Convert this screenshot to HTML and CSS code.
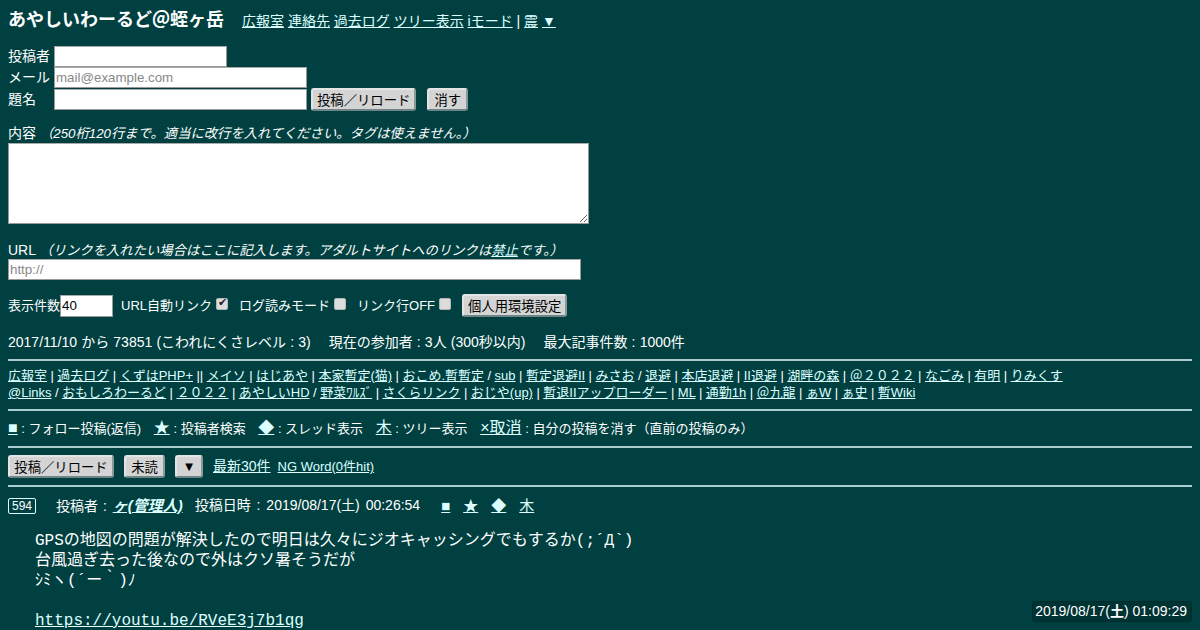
FILE: index.html
```html
<!DOCTYPE html>
<html lang="ja">
<head>
  <meta charset="UTF-8">
  <title>あやしいわーるど＠蛭ヶ岳</title>
  <link rel="stylesheet" href="styles.css">
</head>
<body>
  <div class="top-line">
    <span class="site-title">あやしいわーるど＠蛭ヶ岳</span>
    <span class="top-links">
      <a href="#">広報室</a> <a href="#">連絡先</a> <a href="#">過去ログ</a> <a href="#">ツリー表示</a> <a href="#">iモード</a> | <a href="#">震</a> <a href="#">▼</a>
    </span>
  </div>

  <form class="post-form">
    <div class="field-row"><span class="field-label">投稿者</span><input class="input-name" type="text"></div>
    <div class="field-row"><span class="field-label">メール</span><input class="input-wide" type="text" placeholder="mail@example.com"></div>
    <div class="field-row subject-row">
      <span class="field-label">題名</span><input class="input-wide" type="text">
      <button class="btn btn-post" type="button">投稿／リロード</button>
      <button class="btn btn-clear btn-short" type="button">消す</button>
    </div>

    <div class="field-note">内容 <i class="note">（250桁120行まで。適当に改行を入れてください。タグは使えません。）</i></div>
    <textarea class="input-body"></textarea>

    <div class="field-note url-note">URL <i class="note">（リンクを入れたい場合はここに記入します。アダルトサイトへのリンクは<a href="#">禁止</a>です。）</i></div>
    <input class="input-url" type="text" placeholder="http://">

    <div class="option-row">
      <span>表示件数</span><input class="input-count" type="text" value="40">
      <span class="opt opt-first">URL自動リンク</span><input class="check" type="checkbox" checked>
      <span class="opt">ログ読みモード</span><input class="check" type="checkbox">
      <span class="opt">リンク行OFF</span><input class="check" type="checkbox">
      <button class="btn btn-env" type="button">個人用環境設定</button>
    </div>
  </form>

  <div class="stats">2017/11/10 から 73851 (こわれにくさレベル : 3)<span class="stat-gap">現在の参加者 : 3人 (300秒以内)</span><span class="stat-gap">最大記事件数 : 1000件</span></div>

  <hr>

  <div class="link-list">
    <a href="#">広報室</a> | <a href="#">過去ログ</a> | <a href="#">くずはPHP+</a> || <a href="#">メイソ</a> | <a href="#">はじあや</a> | <a href="#">本家暫定(猫)</a> | <a href="#">おこめ.暫暫定</a> / <a href="#">sub</a> | <a href="#">暫定退避II</a> | <a href="#">みさお</a> / <a href="#">退避</a> | <a href="#">本店退避</a> | <a href="#">II退避</a> | <a href="#">湖畔の森</a> | <a href="#">＠２０２２</a> | <a href="#">なごみ</a> | <a href="#">有明</a> | <a href="#">りみくす</a><br>
    <a href="#">@Links</a> / <a href="#">おもしろわーるど</a> | <a href="#">２０２２</a> | <a href="#">あやしいHD</a> / <a href="#">野菜ﾜﾙｽﾞ</a> | <a href="#">さくらリンク</a> | <a href="#">おじや(up)</a> | <a href="#">暫退IIアップローダー</a> | <a href="#">ML</a> | <a href="#">通勤1h</a> | <a href="#">＠九龍</a> | <a href="#">ぁW</a> | <a href="#">ぁ史</a> | <a href="#">暫Wiki</a>
  </div>

  <hr>

  <div class="legend">
    <a class="mark" href="#">■</a> : フォロー投稿(返信)
    <a class="mark gap" href="#">★</a> : 投稿者検索
    <a class="mark gap" href="#">◆</a> : スレッド表示
    <a class="mark gap" href="#">木</a> : ツリー表示
    <a class="mark gap" href="#">×取消</a> : 自分の投稿を消す（直前の投稿のみ）
  </div>

  <hr>

  <div class="tool-row">
    <button class="btn btn-reload" type="button">投稿／リロード</button>
    <button class="btn btn-short" type="button">未読</button>
    <button class="btn btn-arrow" type="button">▼</button>
    <a href="#">最新30件</a>
    <a class="ng" href="#">NG Word(0件hit)</a>
  </div>

  <hr>

  <div class="post">
    <div class="post-head">
      <span class="post-no">594</span>
      <span class="post-by">投稿者 : <a class="author" href="#">ヶ(管理人)</a></span>
      <span class="post-date">投稿日時 : 2019/08/17(土) 00:26:54</span>
      <span class="post-marks"><a href="#">■</a><a href="#">★</a><a href="#">◆</a><a href="#">木</a></span>
    </div>
    <pre class="post-body">GPSの地図の問題が解決したので明日は久々にジオキャッシングでもするか(;´Д`)
台風過ぎ去った後なので外はクソ暑そうだが
ｼﾐヽ(´ー｀)ﾉ

<a href="#">https://youtu.be/RVeE3j7b1qg</a></pre>
  </div>

  <div class="clock">2019/08/17(<b>土</b>) 01:09:29</div>
</body>
</html>
```

FILE: styles.css
```css
/* ページ全体 */
html, body {
  height: 100%;
}

body {
  margin: 0;
  padding: 8px;
  box-sizing: border-box;
  overflow: hidden;
  background-color: #004040;
  color: #ffffff;
  font-family: "Liberation Sans", "Noto Sans CJK JP", sans-serif;
  font-size: 14px;
  line-height: 17px;
}

a {
  color: #ddffff;
}

hr {
  margin: 0;
  height: 2px;
  border: none;
  background-color: #aacccc;
}

/* タイトル行 */
.top-line {
  display: flex;
  align-items: flex-start;
  height: 25px;
}

.site-title {
  font-size: 18px;
  font-weight: bold;
  line-height: 25px;
}

.top-links {
  margin-top: 5px;
  margin-left: 18px;
}

/* 投稿フォーム */
.post-form {
  margin-top: 13px;
}

.field-row {
  display: flex;
  align-items: center;
  height: 21px;
}

.subject-row {
  margin-top: 1px;
}

.field-label {
  width: 46px;
}

input, textarea {
  margin: 0;
  padding: 1px;
  box-sizing: border-box;
  border: 1px solid #999999;
  border-top-color: #aaaaaa;
  background-color: #ffffff;
  font-family: "Liberation Sans", "Noto Sans CJK JP", sans-serif;
  font-size: 13.33px;
}

::placeholder {
  color: #888888;
}

.input-name {
  width: 173px;
  height: 21px;
}

.input-wide {
  width: 253px;
  height: 21px;
}

.input-body {
  display: block;
  width: 581px;
  height: 81px;
}

.input-url {
  display: block;
  width: 573px;
  height: 21px;
}

.input-count {
  width: 53px;
  height: 22px;
}

.btn {
  height: 23px;
  padding: 0 4px;
  border: 2px solid;
  border-color: #e4e4e4 #8a9a9a #6f8484 #e4e4e4;
  border-radius: 3px;
  background-color: #d4d4d4;
  color: #000000;
  font-family: "Liberation Sans", "Noto Sans CJK JP", sans-serif;
  font-size: 13.33px;
}

.btn-reload {
  width: 106px;
}

.btn-short {
  width: 41px;
}

.btn-arrow {
  width: 28px;
}

.btn-post {
  margin-left: 4px;
}

.btn-clear {
  margin-left: 11px;
}

.field-note {
  margin-top: 15px;
  height: 18px;
}

.url-note {
  margin-top: 18px;
  height: 17px;
}

.note {
  font-size: 13.33px;
}

/* 表示オプション */
.option-row {
  display: flex;
  align-items: center;
  margin-top: 13px;
  height: 25px;
  font-size: 13px;
}

.opt {
  margin-left: 11px;
}

.opt-first {
  margin-left: 8px;
}

.check {
  appearance: none;
  position: relative;
  width: 12px;
  height: 12px;
  margin: 0 0 4px 4px;
  border: 1px solid #b0b8b8;
  border-radius: 2px;
  background-color: #dcdcdc;
}

.check:checked::after {
  content: "✔";
  position: absolute;
  left: 1px;
  top: -3px;
  color: #222222;
  font-size: 11px;
}

.btn-env {
  margin-left: 11px;
}

.stats {
  margin-top: 16px;
  margin-bottom: 8px;
  word-spacing: 0.25px;
}

.stat-gap {
  margin-left: 18px;
}

/* リンク一覧 */
.link-list {
  padding: 6px 0 8px;
  font-size: 13px;
  word-spacing: -0.14px;
}

.legend {
  padding: 8px 0 9px;
  font-size: 13px;
}

.mark {
  font-size: 16px;
}

.gap {
  margin-left: 9px;
}

.tool-row {
  display: flex;
  align-items: center;
  height: 37px;
  gap: 10px;
}

.ng {
  margin-left: -3px;
  font-size: 13px;
}

/* 投稿 */
.post-head {
  display: flex;
  align-items: center;
  margin-top: 9px;
  height: 19px;
}

.post-no {
  padding: 0 3px;
  border: 1px solid #ddffff;
  border-radius: 2px;
  font-size: 12px;
  line-height: 14px;
}

.post-by {
  margin-left: 20px;
  word-spacing: 1px;
}

.author {
  margin-left: 1px;
  font-size: 15px;
  font-weight: bold;
  font-style: italic;
}

.post-date {
  margin-left: 12px;
  word-spacing: 2px;
}

.post-marks {
  display: flex;
  gap: 13px;
  margin-left: 21px;
  font-size: 15px;
}

.post-body {
  margin: 16px 0 0 27px;
  font-family: "Liberation Mono", "Noto Sans CJK JP", monospace;
  font-size: 16px;
  line-height: 20px;
}

/* 時計 */
.clock {
  position: fixed;
  right: 8px;
  bottom: 8px;
  padding: 1px 4px 1px 2px;
  border: 1px solid #002c2c;
  border-radius: 3px;
  background-color: #003333;
}
```
